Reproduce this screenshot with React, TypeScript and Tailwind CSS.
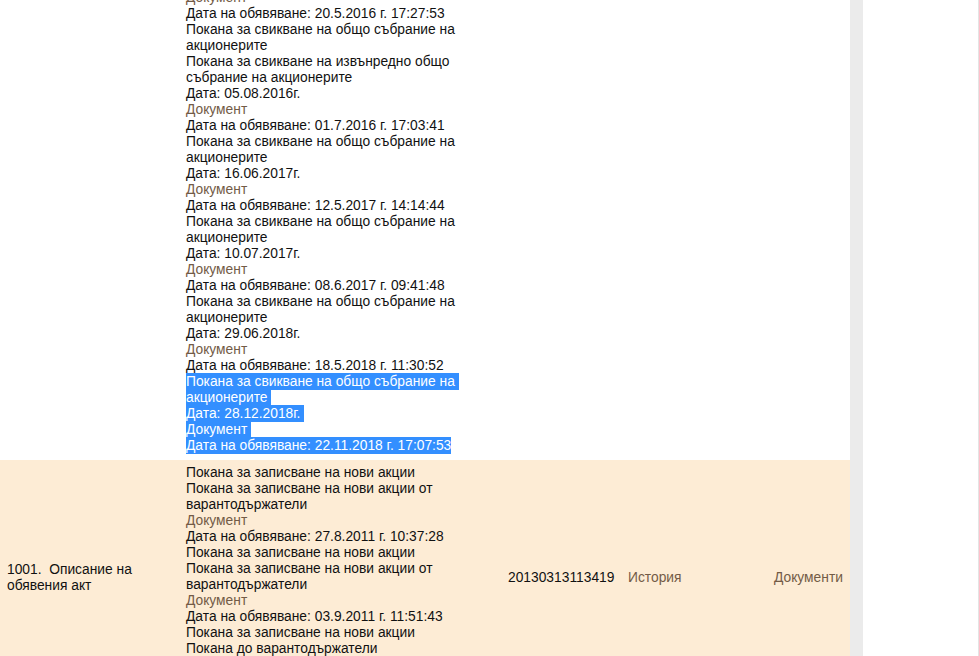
type Entry = {
  titles: string[];
  date?: string;
  published: string;
};

// earlier announcements of the first act (the list is scrolled, its top is cut)
const firstActEntries: Entry[] = [
  {
    titles: ["Покана за свикване на общо събрание на акционерите", "Покана за свикване на извънредно общо събрание на акционерите"],
    date: "05.08.2016г.",
    published: "01.7.2016 г. 17:03:41",
  },
  {
    titles: ["Покана за свикване на общо събрание на акционерите"],
    date: "16.06.2017г.",
    published: "12.5.2017 г. 14:14:44",
  },
  {
    titles: ["Покана за свикване на общо събрание на акционерите"],
    date: "10.07.2017г.",
    published: "08.6.2017 г. 09:41:48",
  },
  {
    titles: ["Покана за свикване на общо събрание на акционерите"],
    date: "29.06.2018г.",
    published: "18.5.2018 г. 11:30:52",
  },
];

const secondActEntries: Entry[] = [
  {
    titles: ["Покана за записване на нови акции", "Покана за записване на нови акции от варантодържатели"],
    published: "27.8.2011 г. 10:37:28",
  },
  {
    titles: ["Покана за записване на нови акции", "Покана за записване на нови акции от варантодържатели"],
    published: "03.9.2011 г. 11:51:43",
  },
  {
    titles: ["Покана за записване на нови акции", "Покана до варантодържатели"],
    published: "14.9.2011 г. 12:05:10",
  },
];

const linkCls = "text-[#735b46] hover:underline cursor-pointer";

function DocLink() {
  return <div><a className={linkCls}>Документ</a></div>;
}

function EntryBlock({ entry }: { entry: Entry }) {
  return (
    <>
      {entry.titles.map((t, i) => (
        <div key={i}>{t}</div>
      ))}
      {entry.date && <div>Дата: {entry.date}</div>}
      <DocLink />
      <div>Дата на обявяване: {entry.published}</div>
    </>
  );
}

// the last announcement of the first act, marked as selected text
function Sel({ children }: { children: React.ReactNode }) {
  return (
    <div>
      <span className="bg-[#338fff] text-white py-px">{children}</span>
    </div>
  );
}

export default function App() {
  return (
    <div className="h-[656px] overflow-hidden bg-white flex text-[13.8px] leading-4 text-[#111] font-['Liberation_Sans',Arial,sans-serif]">
      <div className="w-[850px] shrink-0">
        <div className="-mt-[10px]">
          {/* row 1 */}
          <div className="grid grid-cols-[179px_322px_120px_146px_83px] items-center bg-white">
            <div className="px-[7px]" />
            <div className="px-[7px] pb-[6px]">
              <DocLink />
              <div>Дата на обявяване: 20.5.2016 г. 17:27:53</div>
              {firstActEntries.map((e, i) => (
                <EntryBlock key={i} entry={e} />
              ))}
              <Sel>Покана за свикване на общо събрание на&nbsp;</Sel>
              <Sel>акционерите&nbsp;</Sel>
              <Sel>Дата: 28.12.2018г.&nbsp;</Sel>
              <Sel>Документ&nbsp;</Sel>
              <Sel>Дата на обявяване: 22.11.2018 г. 17:07:53</Sel>
            </div>
            <div className="px-[7px]" />
            <div className="px-[7px]" />
            <div className="px-[7px]" />
          </div>

          {/* row 2 */}
          <div className="grid grid-cols-[179px_322px_120px_146px_83px] items-center bg-[#fdecd5]">
            <div className="px-[7px]">1001.&nbsp; Описание на обявения акт</div>
            <div className="px-[7px] pt-[5px] pb-[7px]">
              {secondActEntries.map((e, i) => (
                <EntryBlock key={i} entry={e} />
              ))}
            </div>
            <div className="px-[7px]">20130313113419</div>
            <div className="px-[7px]">
              <a className={linkCls}>История</a>
            </div>
            <div className="px-[7px]">
              <a className={linkCls}>Документи</a>
            </div>
          </div>
        </div>
      </div>

      {/* page side strip */}
      <div className="w-[13px] shrink-0 bg-[#ebebeb]" />
      <div className="flex-1 bg-white border-r border-[#e4e4e4]" />
    </div>
  );
}
